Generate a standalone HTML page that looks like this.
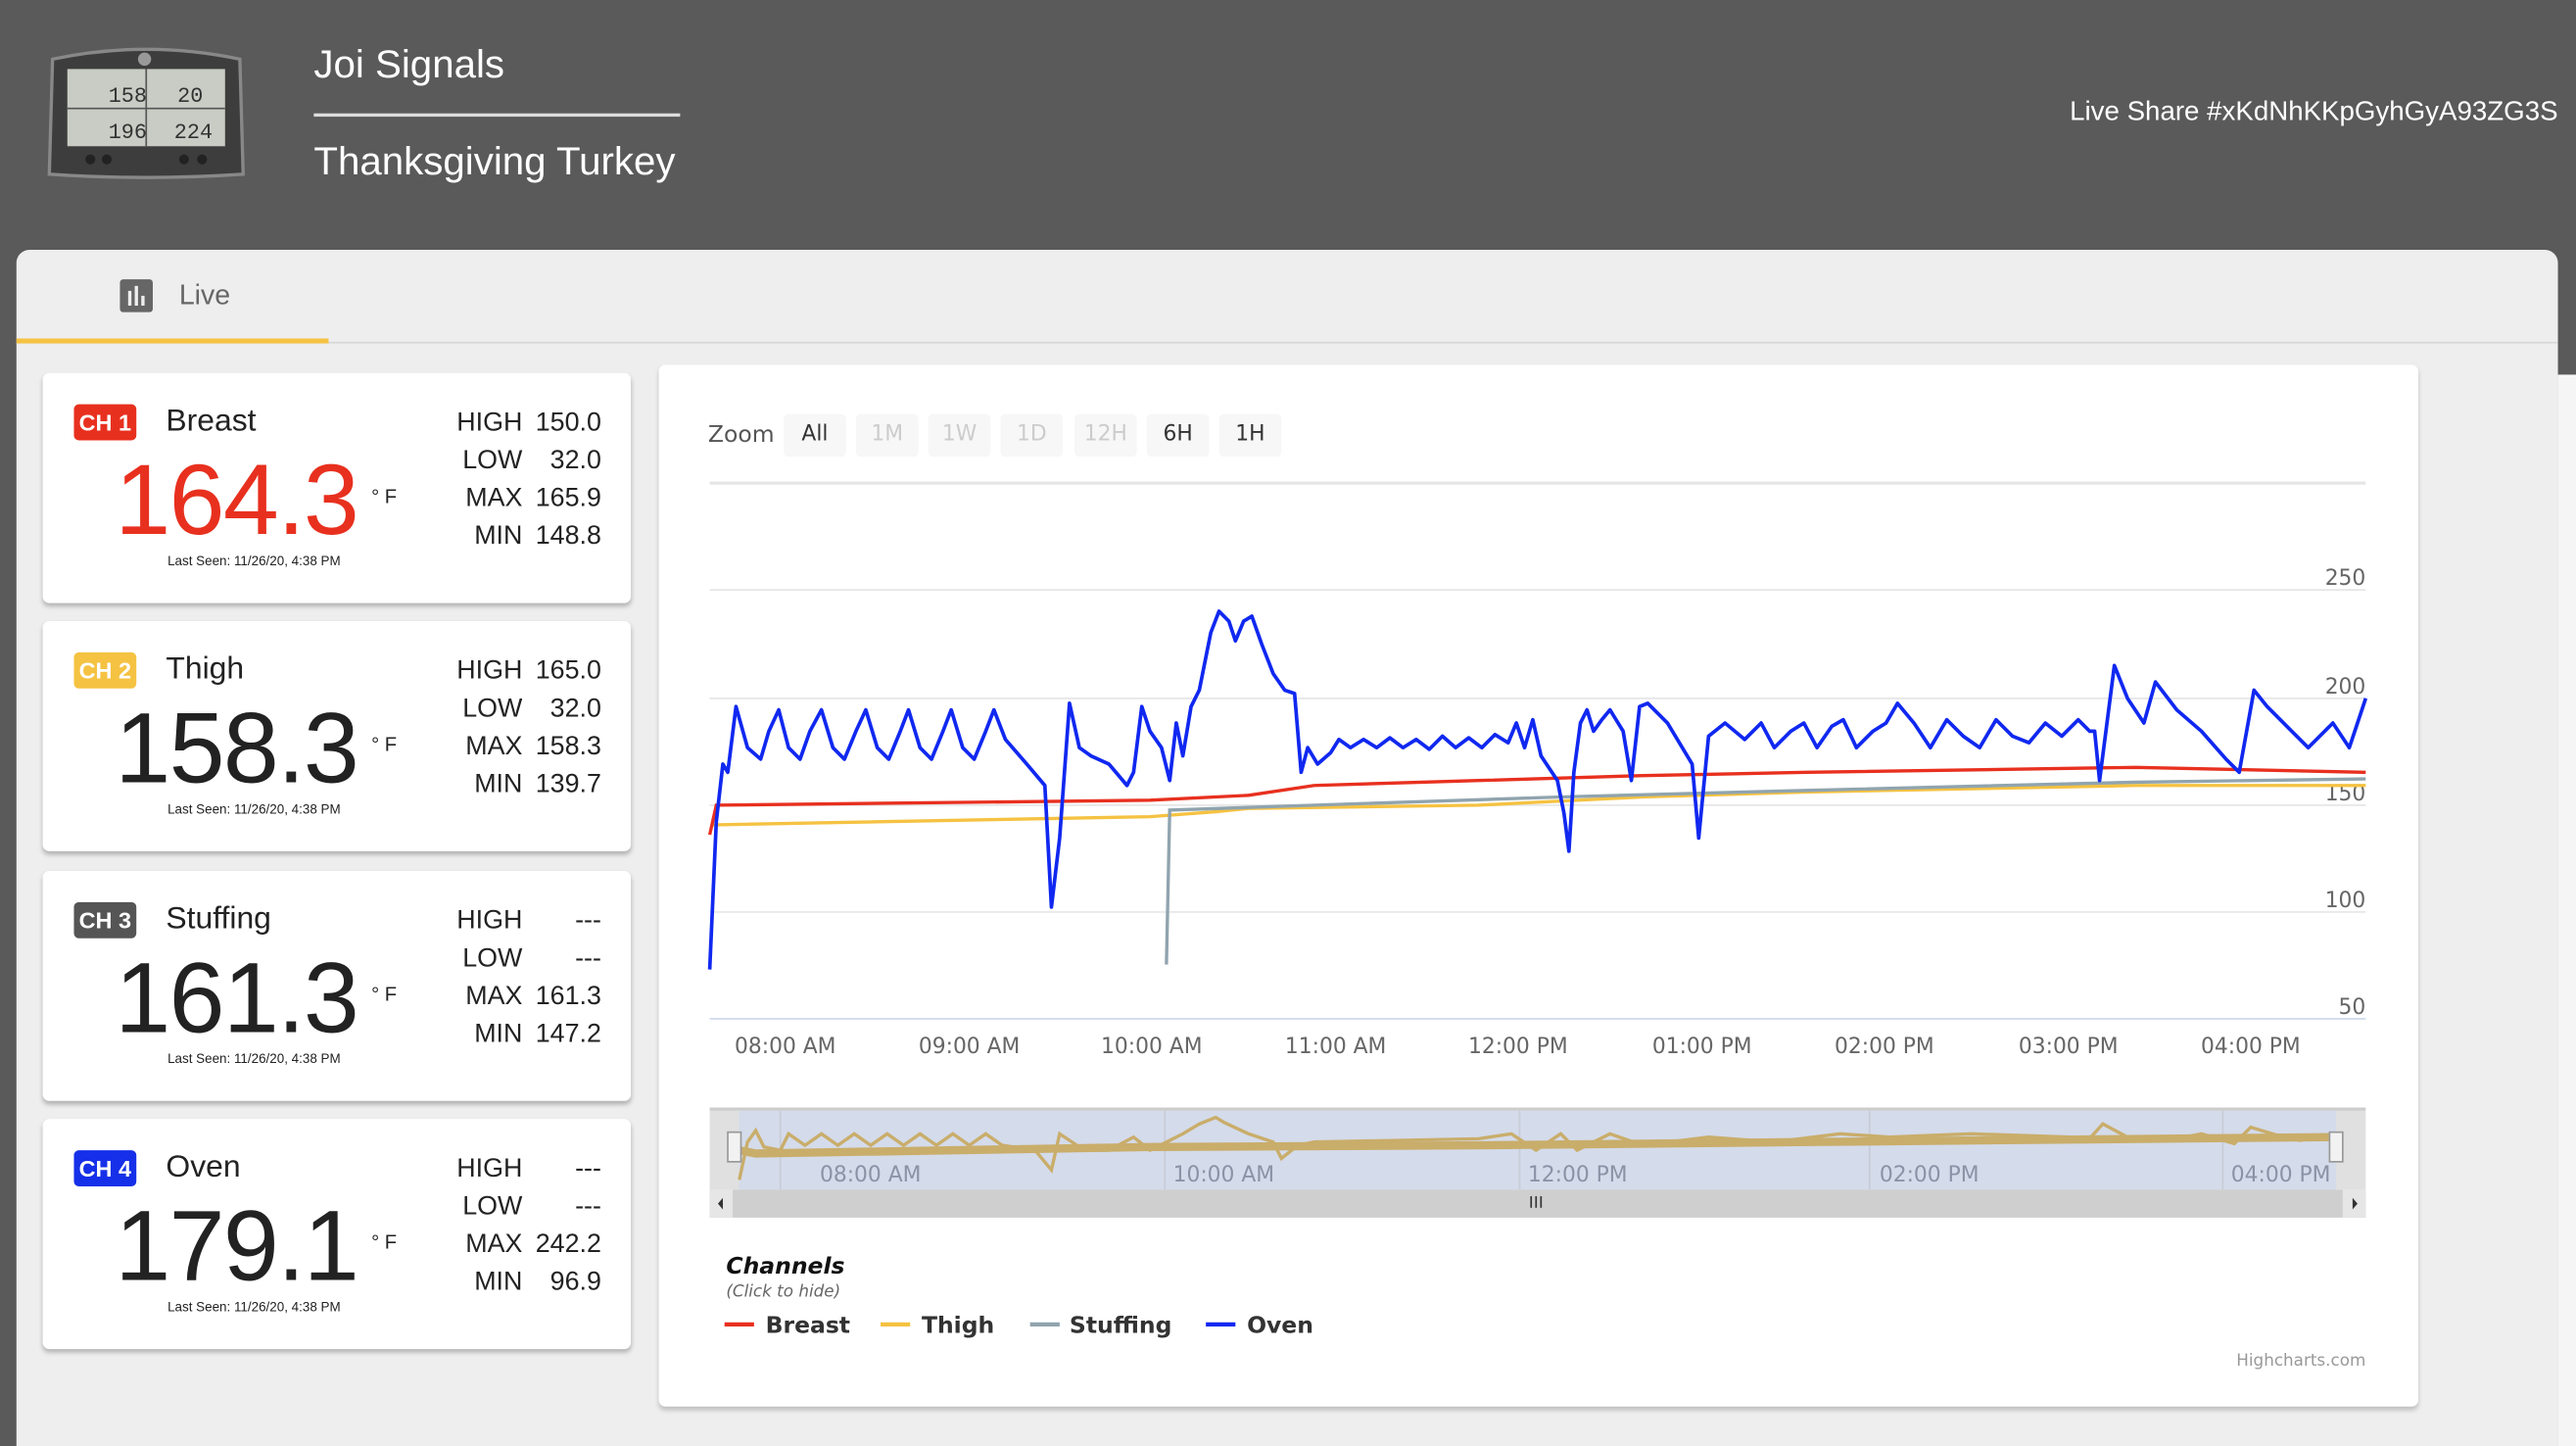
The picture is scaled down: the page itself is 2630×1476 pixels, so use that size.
<!DOCTYPE html>
<html><head><meta charset="utf-8">
<style>
*{margin:0;padding:0;box-sizing:border-box}
html,body{width:2630px;height:1476px;overflow:hidden;background:#5a5a5a;font-family:"Liberation Sans",sans-serif}
#w{width:1568px;height:880px;transform:scale(1.67730);transform-origin:0 0;position:relative;background:#5a5a5a}
.abs{position:absolute}
.t{color:#fff}
.card{position:absolute;left:26px;width:358px;height:140px;background:#fff;border-radius:4px;box-shadow:0 2px 3px rgba(0,0,0,.25)}
.badge{position:absolute;left:19px;top:19px;width:38px;height:22px;border-radius:3px;color:#fff;font-weight:bold;font-size:14px;line-height:22px;text-align:center}
.name{position:absolute;left:75px;top:19px;font-size:19px;color:#222}
.big{position:absolute;left:44px;top:42px;font-size:61px;color:#222;letter-spacing:-1px}
.unit{position:absolute;left:200px;top:68px;font-size:12px;color:#222}
.seen{position:absolute;left:76px;top:110px;font-size:8px;color:#222}
.stats{position:absolute;right:18px;top:19px;font-size:16px;color:#222;line-height:23px}
.stats div{display:flex;justify-content:flex-end}
.stats span{display:inline-block;width:48px;text-align:right}
.zb{position:absolute;top:252px;height:26px;width:38px;background:#f7f7f7;border-radius:3px;font-family:"DejaVu Sans",sans-serif;font-size:13px;line-height:26px;text-align:center;color:#333}
.zb.d{color:#ccc}
</style></head><body><div id="w">
<svg class="abs" style="left:28px;top:26px" width="122" height="86" viewBox="0 0 122 86">
<path d="M4 10 Q61 -2 118 10 L120 80 Q61 84 2 80Z" fill="#3d3d3d" stroke="#888" stroke-width="2"/>
<rect x="13" y="16" width="96" height="47" fill="#c9ccc4"/>
<line x1="61" y1="16" x2="61" y2="63" stroke="#555"/><line x1="13" y1="40" x2="109" y2="40" stroke="#555"/>
<text x="38" y="36" font-size="13" fill="#333" font-family="Liberation Mono">158</text>
<text x="80" y="36" font-size="13" fill="#333" font-family="Liberation Mono">20</text>
<text x="38" y="58" font-size="13" fill="#333" font-family="Liberation Mono">196</text>
<text x="78" y="58" font-size="13" fill="#333" font-family="Liberation Mono">224</text>
<circle cx="60" cy="10" r="4" fill="#999"/>
<g fill="#222"><circle cx="27" cy="71" r="3"/><circle cx="37" cy="71" r="3"/><circle cx="84" cy="71" r="3"/><circle cx="95" cy="71" r="3"/></g>
</svg>
<div class="abs t" style="left:191px;top:26px;font-size:24px">Joi Signals</div>
<div class="abs" style="left:191px;top:69px;width:223px;height:2px;background:#ddd"></div>
<div class="abs t" style="left:191px;top:85px;font-size:24px">Thanksgiving Turkey</div>
<div class="abs t" style="right:11px;top:59px;font-size:16.5px">Live Share #xKdNhKKpGyhGyA93ZG3S</div>
<div class="abs" style="left:1557px;top:228px;width:11px;height:652px;background:#f5f5f5"></div>
<div class="abs" style="left:10px;top:152px;width:1547px;height:728px;background:#eee;border-radius:8px 8px 0 0"></div>
<div class="abs" style="left:10px;top:208px;width:1547px;height:1px;background:#d6d6d6"></div>
<div class="abs" style="left:10px;top:206px;width:190px;height:3px;background:#f5c242"></div>
<div class="abs" style="left:73px;top:170px;width:20px;height:20px;background:#666;border-radius:2px"></div>
<div class="abs" style="left:78px;top:177px;width:2px;height:9px;background:#eee"></div>
<div class="abs" style="left:82px;top:174px;width:2px;height:12px;background:#eee"></div>
<div class="abs" style="left:86px;top:180px;width:2px;height:6px;background:#eee"></div>
<div class="abs" style="left:109px;top:170px;font-size:17px;color:#666">Live</div>

<div class="card" style="top:227px"><div class="badge" style="background:#e8301f">CH 1</div><div class="name">Breast</div><div class="big" style="color:#e8301f">164.3</div><div class="unit">° F</div><div class="seen">Last Seen: 11/26/20, 4:38 PM</div>
<div class="stats"><div>HIGH<span>150.0</span></div><div>LOW<span>32.0</span></div><div>MAX<span>165.9</span></div><div>MIN<span>148.8</span></div></div></div>
<div class="card" style="top:378px"><div class="badge" style="background:#f5c242">CH 2</div><div class="name">Thigh</div><div class="big">158.3</div><div class="unit">° F</div><div class="seen">Last Seen: 11/26/20, 4:38 PM</div>
<div class="stats"><div>HIGH<span>165.0</span></div><div>LOW<span>32.0</span></div><div>MAX<span>158.3</span></div><div>MIN<span>139.7</span></div></div></div>
<div class="card" style="top:530px"><div class="badge" style="background:#555">CH 3</div><div class="name">Stuffing</div><div class="big">161.3</div><div class="unit">° F</div><div class="seen">Last Seen: 11/26/20, 4:38 PM</div>
<div class="stats"><div>HIGH<span>---</span></div><div>LOW<span>---</span></div><div>MAX<span>161.3</span></div><div>MIN<span>147.2</span></div></div></div>
<div class="card" style="top:681px"><div class="badge" style="background:#1530e8">CH 4</div><div class="name">Oven</div><div class="big">179.1</div><div class="unit">° F</div><div class="seen">Last Seen: 11/26/20, 4:38 PM</div>
<div class="stats"><div>HIGH<span>---</span></div><div>LOW<span>---</span></div><div>MAX<span>242.2</span></div><div>MIN<span>96.9</span></div></div></div>

<div class="abs" style="left:401px;top:222px;width:1071px;height:634px;background:#fff;border-radius:4px;box-shadow:0 2px 3px rgba(0,0,0,.2)"></div>
<div class="abs" style="left:431px;top:257px;font-family:'DejaVu Sans',sans-serif;font-size:14px;color:#555">Zoom</div>
<div class="zb" style="left:477px">All</div><div class="zb d" style="left:521px">1M</div><div class="zb d" style="left:565px">1W</div><div class="zb d" style="left:609px">1D</div><div class="zb d" style="left:654px">12H</div><div class="zb" style="left:698px">6H</div><div class="zb" style="left:742px">1H</div>
<svg class="abs" style="left:0;top:0" width="1568" height="880" font-family="DejaVu Sans,sans-serif">
<line x1="432" y1="294" x2="1440" y2="294" stroke="#e6e6e6" stroke-width="2"/>
<g stroke="#e6e6e6"><line x1="432" y1="359" x2="1440" y2="359"/><line x1="432" y1="425" x2="1440" y2="425"/><line x1="432" y1="490" x2="1440" y2="490"/><line x1="432" y1="555" x2="1440" y2="555"/><line x1="432" y1="620" x2="1440" y2="620" stroke="#ccd6eb"/></g>
<g font-size="13" fill="#666" text-anchor="end"><text x="1440" y="356">250</text><text x="1440" y="422">200</text><text x="1440" y="487">150</text><text x="1440" y="552">100</text><text x="1440" y="617">50</text></g>
<g font-size="13" fill="#666" text-anchor="middle"><text x="478" y="641">08:00 AM</text><text x="590" y="641">09:00 AM</text><text x="701" y="641">10:00 AM</text><text x="813" y="641">11:00 AM</text><text x="924" y="641">12:00 PM</text><text x="1036" y="641">01:00 PM</text><text x="1147" y="641">02:00 PM</text><text x="1259" y="641">03:00 PM</text><text x="1370" y="641">04:00 PM</text></g>
<polyline fill="none" stroke="#f5c242" stroke-width="2" points="434,502 700,497 740,494 760,492 900,490 1000,485 1100,482 1300,478 1440,478"/>
<polyline fill="none" stroke="#90a4ae" stroke-width="2" points="710,587 712,493 800,490 950,485 1100,481 1300,476 1440,474"/>
<polyline fill="none" stroke="#e8301f" stroke-width="2" points="432,508 436,490 700,487 760,484 800,478 900,475 1000,472 1100,470 1300,467 1440,470"/>
<polyline fill="none" stroke="#1028f0" stroke-width="2.2" stroke-linejoin="round" points="432,590 436,500 440,465 443,470 448,430 455,455 463,462 468,445 474,432 480,455 487,462 493,445 500,432 507,455 514,462 521,445 527,432 534,455 541,462 548,445 553,432 560,455 567,462 574,445 579,432 586,455 593,462 600,445 605,432 612,450 625,465 636,478 640,552 645,510 651,428 657,455 664,460 675,465 686,478 690,470 695,430 700,445 707,455 712,475 716,440 720,460 725,430 730,420 737,385 742,372 748,378 752,390 757,378 762,375 768,392 775,410 782,420 788,422 792,470 796,455 802,465 810,458 815,450 822,455 830,450 838,455 846,449 854,455 862,450 870,456 878,448 886,455 894,449 902,455 910,447 918,452 923,440 928,455 933,438 938,460 948,475 952,495 955,518 958,470 962,440 966,432 970,445 975,438 980,432 988,445 993,475 998,430 1003,428 1015,440 1030,465 1034,510 1040,448 1050,440 1062,450 1072,440 1080,455 1090,445 1098,440 1106,455 1115,442 1122,438 1130,455 1140,445 1148,440 1155,428 1165,440 1175,455 1185,438 1195,448 1205,455 1215,438 1225,448 1235,452 1245,440 1255,448 1265,438 1272,445 1275,445 1278,475 1287,405 1295,425 1305,440 1312,415 1325,432 1340,445 1355,462 1363,470 1372,420 1380,430 1395,445 1405,455 1420,440 1430,455 1440,425"/>
<line x1="432" y1="675" x2="1440" y2="675" stroke="#ccc" stroke-width="2"/>
<rect x="432" y="676" width="1008" height="48" fill="#e0e0e0"/>
<rect x="450" y="676" width="972" height="48" fill="#d4dbea"/>
<g stroke="#c8ccd6"><line x1="475" y1="676" x2="475" y2="724"/><line x1="709" y1="676" x2="709" y2="724"/><line x1="925" y1="676" x2="925" y2="724"/><line x1="1138" y1="676" x2="1138" y2="724"/><line x1="1353" y1="676" x2="1353" y2="724"/></g>
<g font-size="13" fill="#8a93a6"><text x="499" y="719">08:00 AM</text><text x="714" y="719">10:00 AM</text><text x="930" y="719">12:00 PM</text><text x="1144" y="719">02:00 PM</text><text x="1358" y="719">04:00 PM</text></g>
<path d="M450 700 L460 702 L700 698 L900 697 L1100 695 L1422 692" fill="none" stroke="#c9ad6a" stroke-width="5"/>
<polyline fill="none" stroke="#c9ad6a" stroke-width="2" points="450,718 455,695 460,688 465,698 475,700 480,690 490,697 500,690 510,697 520,690 530,697 540,690 550,697 560,690 570,697 580,690 590,697 600,690 610,697 630,700 640,712 645,690 660,700 675,700 690,692 700,700 710,695 720,690 730,684 740,680 745,683 760,690 775,695 780,705 790,697 800,695 900,693 920,690 935,700 950,690 960,700 980,690 1000,697 1040,692 1080,695 1120,690 1150,692 1200,690 1260,692 1270,695 1280,684 1295,692 1320,694 1340,690 1360,696 1370,686 1390,692 1400,694 1422,690"/>
<rect x="443" y="689" width="8" height="18" fill="#f2f2f2" stroke="#999"/>
<rect x="1418" y="689" width="8" height="18" fill="#f2f2f2" stroke="#999"/>
<rect x="432" y="724" width="1008" height="17" fill="#cfcfcf"/>
<rect x="432" y="724" width="14" height="17" fill="#e6e6e6"/><rect x="1426" y="724" width="14" height="17" fill="#e6e6e6"/>
<path d="M440 729 L437 732.5 L440 736Z M1432 729 L1435 732.5 L1432 736Z" fill="#333"/>
<g stroke="#333"><line x1="932" y1="728" x2="932" y2="735"/><line x1="935" y1="728" x2="935" y2="735"/><line x1="938" y1="728" x2="938" y2="735"/></g>
<text x="442" y="775" font-size="14" font-weight="bold" font-style="italic" fill="#111">Channels</text>
<text x="442" y="789" font-size="10" font-style="italic" fill="#666">(Click to hide)</text>
<g font-size="14" font-weight="bold" fill="#333"><text x="466" y="811">Breast</text><text x="561" y="811">Thigh</text><text x="651" y="811">Stuffing</text><text x="759" y="811">Oven</text></g>
<g stroke-width="2.5"><line x1="441" y1="806" x2="459" y2="806" stroke="#e8301f"/><line x1="536" y1="806" x2="554" y2="806" stroke="#f5c242"/><line x1="627" y1="806" x2="645" y2="806" stroke="#90a4ae"/><line x1="734" y1="806" x2="752" y2="806" stroke="#1028f0"/></g>
<text x="1440" y="831" font-size="10" fill="#999" text-anchor="end">Highcharts.com</text>
</svg>
</div></body></html>
